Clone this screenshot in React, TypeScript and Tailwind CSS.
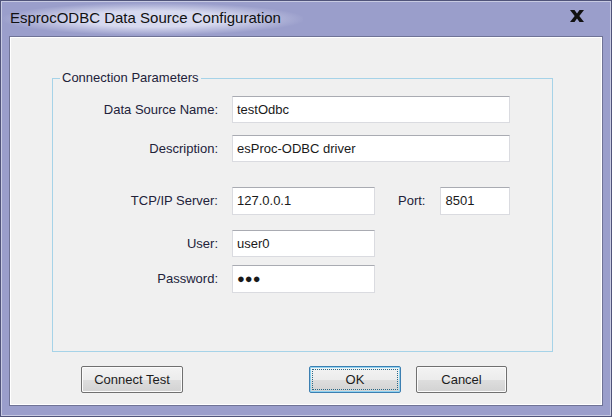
import React from "react";

const FONT = { fontFamily: '"Liberation Sans", Arial, sans-serif' };

function Field({ value, className = "" }: { value: string; className?: string }) {
  return (
    <div
      className={`bg-white border border-[#dadbe0] border-t-[#a9abb2] pl-[4px] flex items-center text-[#1a1a1a] ${className}`}>
      {value}
    </div>);
}

function Row({ label, children, className = "" }: { label: string; children: React.ReactNode; className?: string }) {
  return (
    <div className={`flex items-center ${className}`}>
      <span className="w-[165px] text-right text-[13px] text-[#22223a]">{label}</span>
      <div className="ml-[14px] flex items-center">{children}</div>
    </div>);
}

function Btn({ label, w, primary = false, className = "" }: { label: string; w: string; primary?: boolean; className?: string }) {
  return (
    <button
      className={`${w} h-[27px] rounded-[2px] border text-[13px] text-[#1c1c1c] p-[2px] bg-[linear-gradient(#f3f3f3,#ececec_50%,#dedede_50%,#d2d2d2)] ${
      primary ?
      "border-[#3c7fb1] shadow-[inset_0_0_0_1px_#8fd3f2]" :
      "border-[#707070] shadow-[inset_0_0_0_1px_#fbfbfb]"} ${
      className}`}>
      <div
        className={`h-full w-full flex items-center justify-center ${
        primary ? "border border-dotted border-[#2a6a87]" : ""}`}>
        {label}
      </div>
    </button>);
}

export default function App() {
  return (
    <div
      className="w-[612px] h-[417px] bg-[#9a9ecb] border border-[#50547a] shadow-[inset_0_0_0_1px_rgba(255,255,255,0.45)] flex flex-col px-[8px] pb-[10px]"
      style={FONT}>
      {/* Title bar */}
      <div className="relative h-[35px] flex items-center justify-between">
        <div className="absolute left-[-6px] top-[2px] w-[300px] h-[32px] bg-[radial-gradient(ellipse_at_center,rgba(230,232,248,0.8)_35%,rgba(230,232,248,0)_72%)]" />
        <span className="relative pl-[1px] text-[15px] text-[#111]">EsprocODBC Data Source Configuration</span>
        <svg width="16" height="14" viewBox="0 0 16 14" className="relative mr-[18px] mb-[6px]">
          <path d="M1 1 L5.5 1 L8 4.6 L10.5 1 L15 1 L10.3 7 L15 13 L10.5 13 L8 9.4 L5.5 13 L1 13 L5.7 7 Z" fill="#111" />
        </svg>
      </div>

      {/* Content */}
      <div className="flex-1 flex flex-col bg-[#f0f0f0] border border-[#6f7396] shadow-[inset_0_0_0_1px_#ffffff]">
        <fieldset className="ml-[42px] mt-[33px] w-[501px] h-[282px] border border-[#a6d3e8] pt-[10px]">
          <legend className="ml-[7px] px-[2px] text-[13px] leading-[16px] text-[#22223a]">Connection Parameters</legend>

          <Row label="Data Source Name:">
            <Field value="testOdbc" className="w-[278px] h-[27px] text-[13px]" />
          </Row>
          <Row label="Description:" className="mt-[12px]">
            <Field value="esProc-ODBC driver" className="w-[278px] h-[27px] text-[13px]" />
          </Row>
          <Row label="TCP/IP Server:" className="mt-[25px]">
            <Field value="127.0.0.1" className="w-[143px] h-[28px] text-[13px]" />
            <span className="ml-[23px] text-[13px] text-[#22223a]">Port:</span>
            <Field value="8501" className="ml-[15px] w-[70px] h-[28px] text-[13px]" />
          </Row>
          <Row label="User:" className="mt-[15px]">
            <Field value="user0" className="w-[143px] h-[27px] text-[13px]" />
          </Row>
          <Row label="Password:" className="mt-[8px]">
            <Field value="●●●" className="w-[143px] h-[28px] text-[13px]" />
          </Row>
        </fieldset>

        <div className="flex mt-[14px]">
          <Btn label="Connect Test" w="w-[102px]" className="ml-[71px]" />
          <Btn label="OK" w="w-[92px]" primary className="ml-[126px]" />
          <Btn label="Cancel" w="w-[91px]" className="ml-[15px]" />
        </div>
      </div>
    </div>);
}
